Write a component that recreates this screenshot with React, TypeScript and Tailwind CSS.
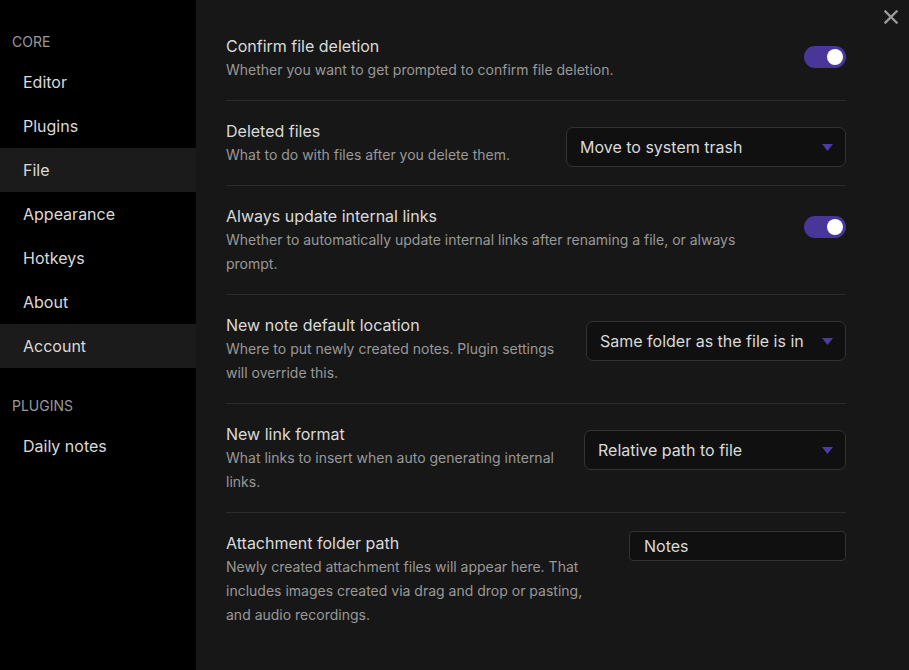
import React from 'react';

const font = { fontFamily: 'Inter, "Noto Sans", sans-serif' };

function Toggle() {
  return (
    <div className="mt-[12px] flex h-[22px] w-[42px] shrink-0 items-center justify-end rounded-full bg-[#483699] pr-[3px]">
      <div className="h-[16px] w-[16px] rounded-full bg-white" />
    </div>
  );
}

function Select({ value, width }: { value: string; width: string }) {
  return (
    <div
      className={`mt-[8px] flex h-[40px] shrink-0 items-center justify-between rounded-[7px] border border-[#333333] bg-[#101010] pl-[13px] pr-[12px] text-[16px] text-[#dadada] ${width}`}
    >
      <span>{value}</span>
      <svg width="11" height="7" viewBox="0 0 11 7">
        <path d="M0 0 H11 L5.5 7 Z" fill="#4b3aa8" />
      </svg>
    </div>
  );
}

function Input({ value }: { value: string }) {
  return (
    <div className="flex h-[30px] w-[217px] shrink-0 items-center rounded-[4px] border border-[#333333] bg-[#101010] pl-[14px] text-[16px] text-[#dadada]">
      {value}
    </div>
  );
}

interface RowProps {
  title: string;
  desc: string;
  control: React.ReactNode;
  last?: boolean;
}

function Row({ title, desc, control, last }: RowProps) {
  return (
    <div className={`flex items-start gap-[24px] py-[18px] ${last ? '' : 'border-b border-[#2c2c2c]'}`}>
      <div className="min-w-0 flex-1">
        <div className="text-[16px] leading-[24px] text-[#dadada]">{title}</div>
        <div className="text-[14px] leading-[24px] text-[#999999]">{desc}</div>
      </div>
      {control}
    </div>
  );
}

const coreItems = ['Editor', 'Plugins', 'File', 'Appearance', 'Hotkeys', 'About', 'Account'];
const selected = ['File', 'Account'];

export default function App() {
  return (
    <div className="relative flex h-[670px] w-[909px] overflow-hidden bg-[#171717]" style={font}>
      <div className="w-[196px] shrink-0 bg-black pt-[32px]">
        <div className="mb-[8px] pl-[12px] text-[14px] leading-[20px] text-[#999999]">CORE</div>
        {coreItems.map((item) => (
          <div
            key={item}
            className={`flex h-[44px] items-center pl-[23px] text-[16px] text-[#dadada] ${
              selected.includes(item) ? 'bg-[#1b1b1b]' : ''
            }`}
          >
            {item}
          </div>
        ))}
        <div className="mb-[8px] mt-[28px] pl-[12px] text-[14px] leading-[20px] text-[#999999]">PLUGINS</div>
        <div className="flex h-[44px] items-center pl-[23px] text-[16px] text-[#dadada]">Daily notes</div>
      </div>

      <div className="flex-1 pl-[30px] pr-[63px] pt-[16px]">
        <Row
          title="Confirm file deletion"
          desc="Whether you want to get prompted to confirm file deletion."
          control={<Toggle />}
        />
        <Row
          title="Deleted files"
          desc="What to do with files after you delete them."
          control={<Select value="Move to system trash" width="w-[280px]" />}
        />
        <Row
          title="Always update internal links"
          desc="Whether to automatically update internal links after renaming a file, or always prompt."
          control={<Toggle />}
        />
        <Row
          title="New note default location"
          desc="Where to put newly created notes. Plugin settings will override this."
          control={<Select value="Same folder as the file is in" width="w-[260px]" />}
        />
        <Row
          title="New link format"
          desc="What links to insert when auto generating internal links."
          control={<Select value="Relative path to file" width="w-[262px]" />}
        />
        <Row
          title="Attachment folder path"
          desc="Newly created attachment files will appear here. That includes images created via drag and drop or pasting, and audio recordings."
          control={<Input value="Notes" />}
          last
        />
      </div>

      <div className="absolute right-[11px] top-[10px]">
        <svg width="14" height="14" viewBox="0 0 14 14">
          <path d="M1.5 1.5 L12.5 12.5 M12.5 1.5 L1.5 12.5" stroke="#9a9a9a" strokeWidth="2.4" strokeLinecap="square" />
        </svg>
      </div>
    </div>
  );
}
